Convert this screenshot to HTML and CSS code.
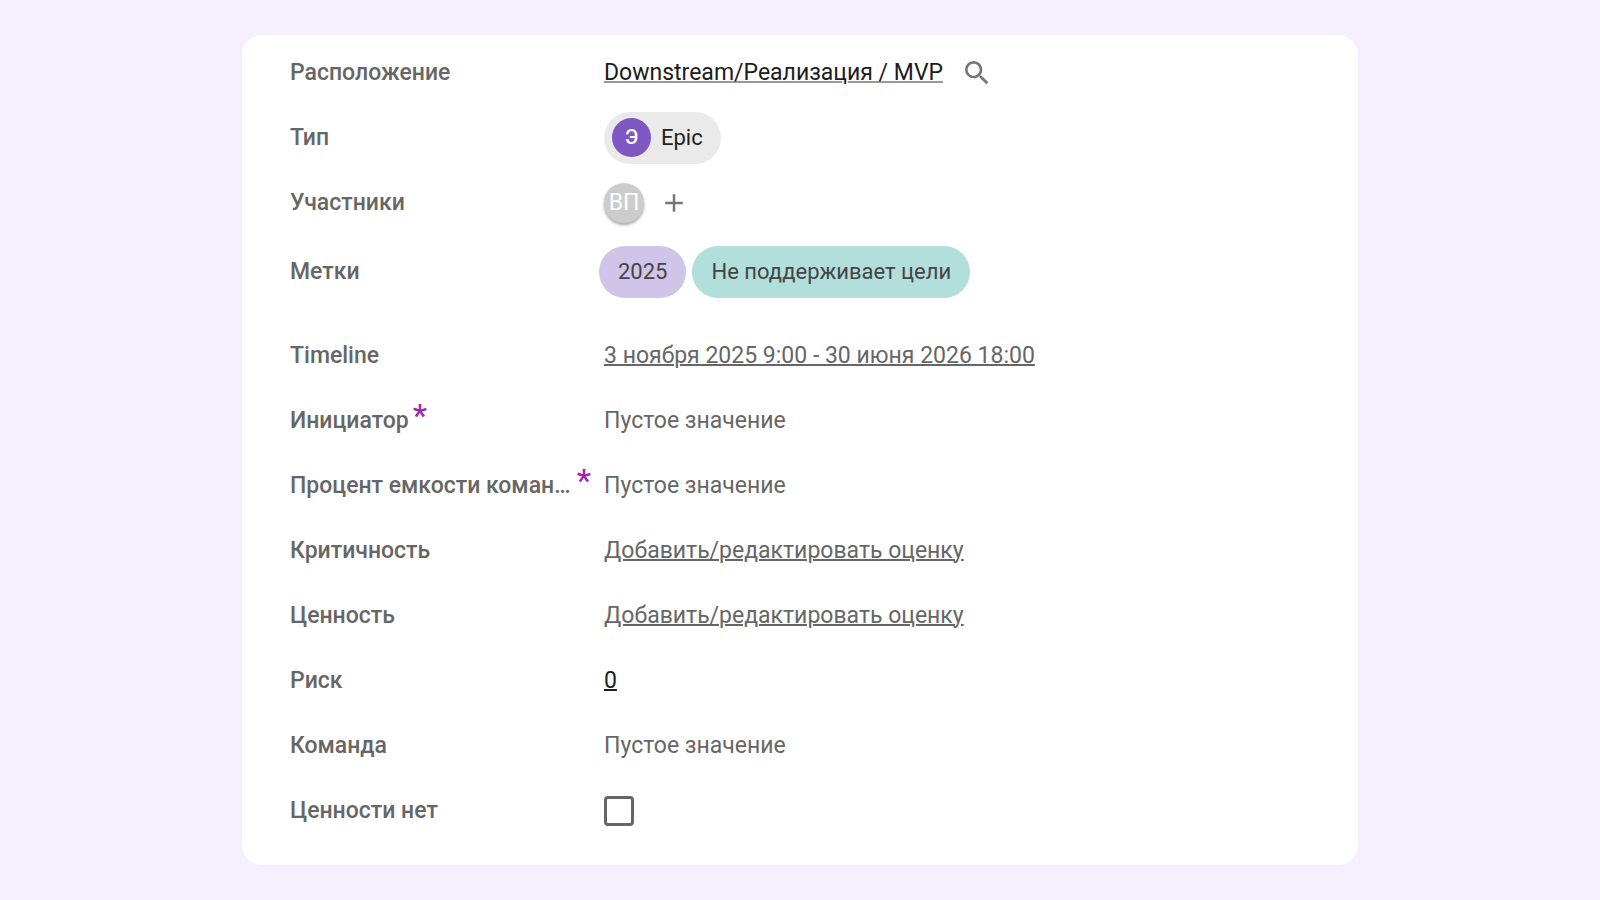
FILE: index.html
```html
<!DOCTYPE html>
<html lang="ru">
<head>
  <meta charset="UTF-8">
  <title>Epic</title>
  <link rel="stylesheet" href="styles.css">
</head>
<body>
  <main class="card">
    <dl class="fields">
      <div class="row">
        <dt class="name">Расположение</dt>
        <dd class="value">
          <a class="link path" href="#">Downstream/Реализация / MVP</a>
          <button class="icon-btn search" type="button" aria-label="Найти">
            <svg width="32" height="32" viewBox="0 0 24 24"><path fill="currentColor" d="M15.5 14h-.79l-.28-.27A6.471 6.471 0 0 0 16 9.5 6.5 6.5 0 1 0 9.5 16c1.61 0 3.09-.59 4.23-1.57l.27.28v.79l5 4.99L20.49 19l-4.99-5zm-6 0C7.01 14 5 11.99 5 9.5S7.01 5 9.5 5 14 7.01 14 9.5 11.99 14 9.5 14z"/></svg>
          </button>
        </dd>
      </div>
      <div class="row">
        <dt class="name">Тип</dt>
        <dd class="value">
          <button class="chip type" type="button"><span class="badge">Э</span>Epic</button>
        </dd>
      </div>
      <div class="row">
        <dt class="name">Участники</dt>
        <dd class="value">
          <span class="avatar">ВП</span>
          <button class="icon-btn add" type="button" aria-label="Добавить участника">
            <svg width="30" height="30" viewBox="0 0 24 24"><path fill="currentColor" d="M19 13h-6v6h-2v-6H5v-2h6V5h2v6h6v2z"/></svg>
          </button>
        </dd>
      </div>
      <div class="row tags">
        <dt class="name">Метки</dt>
        <dd class="value">
          <span class="chip tag purple">2025</span>
          <span class="chip tag teal">Не поддерживает цели</span>
        </dd>
      </div>
      <div class="row">
        <dt class="name">Timeline</dt>
        <dd class="value"><a class="link" href="#">3 ноября 2025 9:00 - 30 июня 2026 18:00</a></dd>
      </div>
      <div class="row">
        <dt class="name"><span class="text">Инициатор</span><span class="required">*</span></dt>
        <dd class="value">Пустое значение</dd>
      </div>
      <div class="row">
        <dt class="name"><span class="text">Процент емкости команды</span><span class="required">*</span></dt>
        <dd class="value">Пустое значение</dd>
      </div>
      <div class="row">
        <dt class="name">Критичность</dt>
        <dd class="value"><a class="link" href="#">Добавить/редактировать оценку</a></dd>
      </div>
      <div class="row">
        <dt class="name">Ценность</dt>
        <dd class="value"><a class="link" href="#">Добавить/редактировать оценку</a></dd>
      </div>
      <div class="row">
        <dt class="name">Риск</dt>
        <dd class="value"><a class="link dark" href="#">0</a></dd>
      </div>
      <div class="row">
        <dt class="name">Команда</dt>
        <dd class="value">Пустое значение</dd>
      </div>
      <div class="row">
        <dt class="name"><label for="no-value">Ценности нет</label></dt>
        <dd class="value"><input class="checkbox" type="checkbox" id="no-value"></dd>
      </div>
    </dl>
  </main>
</body>
</html>
```

FILE: styles.css
```css
* { box-sizing: border-box; }
body { margin: 0; padding: 35px 24px; background: #f5effe; color: #666; font: 23px/32px Roboto, sans-serif; }
.card { max-width: 1116px; margin: 0 auto; padding: 5px 48px 22px; background: #fff; border-radius: 20px; }
.fields { margin: 0; }
.row { display: grid; grid-template-columns: 314px 1fr; align-items: center; min-height: 65px; }
.row.tags { padding: 11px 0 25px; }
.name { display: flex; min-width: 0; padding-right: 13px; font-weight: 500; }
.text { overflow: hidden; text-overflow: ellipsis; white-space: nowrap; }
.required { padding-left: 4px; color: #9c27b0; font-size: 32px; line-height: 20px; }
.value { display: flex; align-items: center; margin: 0; }
.link { color: inherit; text-decoration: underline; text-underline-offset: 1px; text-decoration-thickness: 2px; }
.link.dark { color: #1c1c1c; }
.link.path { color: #1c1c1c; text-decoration-color: #999; }
button { border: none; background: none; color: inherit; font: inherit; cursor: pointer; }
.icon-btn { display: flex; padding: 0; color: #757575; }
.search { margin-left: 18px; }
.add { margin-left: 15px; }
.chip { display: flex; align-items: center; height: 52px; border-radius: 26px; font-size: 22px; }
.type { gap: 10px; padding: 0 18px 0 8px; background: #eaeaea; color: #222; }
.badge { width: 39px; height: 39px; border-radius: 50%; background: #7e57c2; color: #fff; font-size: 20px; font-weight: 500; line-height: 39px; text-align: center; }
.avatar { width: 40px; height: 40px; border-radius: 50%; background: #ccc; color: #fff; line-height: 40px; text-align: center; box-shadow: 0 2px 3px rgba(0, 0, 0, .35); }
.tags .value { gap: 6px; margin-left: -5px; }
.tag { padding: 0 19px; color: #444; }
.purple { background: #d1c4e9; }
.teal { background: #b2dfdb; }
.checkbox { appearance: none; width: 30px; height: 30px; margin: 0; border: 3px solid #666; border-radius: 4px; background: #fff; }
.checkbox:checked { background: #666; }
```
